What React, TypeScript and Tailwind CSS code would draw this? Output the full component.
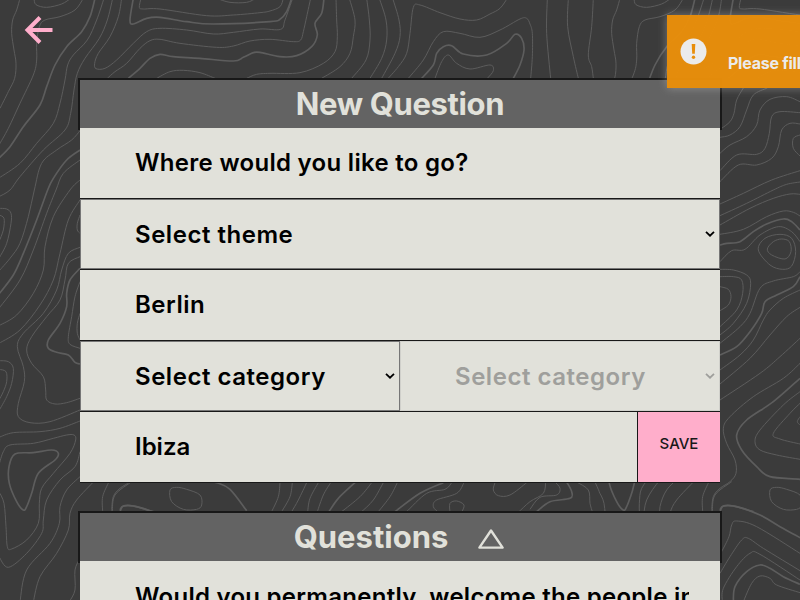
import React from "react";

type Contour = { d: string; thick?: boolean; closed?: boolean };
type Sheet = { x: number; y: number; lines: Contour[] };

const t = (d: string): Contour => ({ d });
const k = (d: string): Contour => ({ d, thick: true });
const c = (d: string): Contour => ({ d, closed: true });

// Contour map, drawn in thirds of a pixel; every sheet has its own origin.
const sheets: Sheet[] = [
  {
    x: 0,
    y: 0,
    lines: [
      t("60,-5 50,30 38,60 35,100 42,150 48,190 44,235 25,275 0,325"),
      t("250,-5 225,30 180,50 135,60 118,80 110,130 110,180 100,225 60,310 25,385 -3,435"),
      t("102,-5 108,14 140,22 185,12 212,-5"),
      k("285,-5 270,50 245,95 200,140 165,195 140,260 120,315 70,380 30,440 -3,474"),
      t("312,-5 290,60 262,120 220,165 203,195 195,240 180,310 160,370 110,430 60,490 -3,534"),
      t("338,-5 322,60 298,115 255,175 232,220 222,270 212,340 195,390 130,450 60,530 30,570 -3,590"),
      t("365,-5 355,50 330,110 295,160 284,190 288,206 315,205 350,180 400,130 440,95 480,85 560,90 640,102 700,97 780,87 842,88 855,60 878,-5"),
      k("400,-5 390,60 400,72 440,55 480,52 560,65 640,72 810,65 840,58 860,35 875,-5"),
      t("423,-5 418,22 430,27 480,27 620,47 700,45 780,38 810,33 840,20 850,-5"),
      t("650,-5 690,7 740,7 768,-5"),
      t("322,235 345,215 380,190 420,145 450,122 480,118 540,130 650,142 700,138 750,123 810,118 880,125 902,120 910,95 920,50 932,-5"),
      k("385,235 420,205 450,175 480,163 520,170 600,175 700,183 730,172 760,158 780,157 840,170 890,167 935,140 952,105 945,70 965,40 972,-5"),
      t("470,235 510,215 550,211 600,218 645,235"),
      t("740,235 770,223 810,220 900,218 970,190 1005,155 1012,110 1010,60 1008,-5"),
    ],
  },
  {
    x: 260,
    y: 0,
    lines: [
      t("268,-5 285,60 280,110 270,160 240,200 185,235"),
      t("320,-5 328,60 330,120 318,180 275,235"),
      t("358,-5 378,60 380,120 365,175 330,235"),
      t("398,-5 417,60 420,110 405,160 365,235"),
      t("380,240 415,200 440,160 450,100 460,22 480,15 540,38 600,57 650,60 690,42 720,25 742,-5"),
      t("445,235 490,180 520,125 550,95 600,100 660,112 720,90 780,57 800,55 810,72 817,100 817,170 812,235"),
      k("485,235 520,195 530,160 550,140 575,137 610,162 680,165 740,130 765,103 785,115 792,150 780,195 760,235"),
      t("525,235 545,185 565,165 590,190 630,207 690,195 700,212 682,235"),
    ],
  },
  {
    x: 530,
    y: 0,
    lines: [
      t("52,-5 50,100 62,235"),
      t("115,-5 113,80 130,170 145,235"),
      t("190,-5 185,80 175,165 185,200 190,235"),
    ],
  },
  {
    x: -70,
    y: 0,
    lines: [
      t("640,264 620,300 612,340 600,365 575,385"),
      t("712,264 670,285 650,330 630,380 600,405 570,412"),
      t("810,305 770,290 720,298 690,330 680,375 650,410 600,435 570,460"),
      t("810,338 750,335 725,350 718,400 705,445 680,463 620,465 570,512"),
      t("810,372 780,370 755,390 745,440 725,475 680,495 625,495 570,545"),
      t("810,405 790,415 790,445 810,468"),
    ],
  },
  {
    x: 0,
    y: 180,
    lines: [
      t("360,72 430,40 515,0 600,-28"),
      t("360,107 440,70 520,30 560,13 600,6"),
      t("360,135 450,85 520,55 570,42 600,43"),
      t("360,163 430,148 500,110 550,93 580,97 600,108"),
      k("360,195 380,190 420,185 460,155 500,132 550,117 575,125 600,150"),
      t("360,245 395,212 435,208 480,165 535,140 575,155 600,185"),
      c("540,163 575,175 587,215 575,258 548,268 510,255 475,210 495,175"),
      c("545,177 568,185 573,215 555,237 515,225 502,207 520,185"),
      t("360,268 400,270 440,285 452,310 440,370 400,430 360,465"),
      t("360,290 400,290 425,300 428,340 410,390 360,440"),
      t("360,320 385,328 393,350 385,375 360,392"),
      t("600,275 580,290 520,303 480,325 450,400 420,440 360,490"),
      k("600,290 580,320 530,345 495,365 485,400 450,455 410,500 360,525"),
      t("600,330 550,355 510,390 490,420 460,480 420,525 360,570"),
      t("600,382 560,410 510,465 450,535 360,612"),
      t("600,475 540,530 480,580 360,660"),
    ],
  },
  {
    x: 120,
    y: 80,
    lines: [
      t("240,850 190,895 100,950 30,1010 10,1045 20,1090 45,1140 48,1180 30,1205 0,1225 -20,1250 -25,1292"),
      k("240,895 160,965 80,1020 50,1065 65,1110 110,1160 150,1190 240,1198 290,1208 330,1228 380,1292"),
      t("240,935 190,975 120,1050 105,1085 120,1110 170,1125 240,1138"),
      t("240,970 210,1000 160,1060 180,1077 240,1092"),
      t("240,1010 232,1025 240,1035"),
      k("0,1290 10,1278 50,1280 120,1305 180,1340 240,1373"),
    ],
  },
  {
    x: -70,
    y: 380,
    lines: [
      t("575,515 597,470 605,435 620,423 680,440 810,520"),
      t("570,580 600,530 635,480 655,475 700,505 810,572"),
      t("577,665 580,625 620,560 660,520 690,523 810,600"),
      k("610,665 615,620 650,575 690,555 720,565 760,590 810,613"),
      t("640,665 665,610 690,588 720,595 740,615 810,638"),
    ],
  },
  {
    x: 0,
    y: 190,
    lines: [
      t("240,-178 215,-150 170,-120 125,-80 103,0 85,80 60,160 30,205 -3,243"),
      k("240,-120 200,-90 160,-35 143,0 110,90 70,190 40,255 -3,312"),
      t("240,-90 190,-50 168,0 140,70 100,180 60,270 -3,355"),
      t("240,-30 210,0 160,80 135,170 130,240 100,310 50,375 -3,407"),
      t("240,30 205,90 180,190 160,270 120,345 60,420 -3,460"),
      t("240,75 232,100 232,120 240,130"),
      t("240,172 205,190 185,240 170,300 130,370 70,430 52,470 70,530 73,575 55,640 55,680 90,698 150,695 240,660"),
      t("240,200 205,220 195,270 180,330 140,380 95,440 80,480 95,520 130,560 137,600 140,630 165,642 200,638 240,625"),
      k("240,235 210,270 200,310 200,350 180,400 145,450 145,475 170,487 205,495 225,517 240,522"),
      t("240,275 225,320 215,380 205,440 210,463 240,475"),
      t("240,370 232,400 232,430 240,450"),
      t("-3,55 20,57 33,70 33,100 20,160 -3,205"),
      t("-3,75 12,85 10,120 -3,155"),
      t("-3,512 25,515 40,535 35,580 20,620 -3,662"),
      t("-3,538 18,545 20,575 10,605 -3,630"),
    ],
  },
  {
    x: 0,
    y: 380,
    lines: [
      t("-3,172 40,158 120,155 180,145 240,123"),
      t("-3,255 10,215 30,195 100,190 160,175 200,165 222,165 227,180 210,220 160,280 125,325 118,370 115,430 80,480 35,507 22,500 18,440 12,370 -3,335"),
      { d: "45,222 100,218 155,210 175,220 165,240 115,280 95,340 80,380 70,390 50,365 28,310 27,260", thick: true, closed: true },
      t("240,215 225,260 180,300 140,360 130,420 125,460 80,520 25,562 -3,530"),
      t("240,290 200,330 180,380 178,430 150,490 80,570 60,665"),
      t("283,303 230,360 210,400 205,450 170,520 120,590 100,665"),
      t("240,535 225,570 225,630 208,665"),
      t("327,305 308,350 308,395"),
      t("395,305 345,345 337,395"),
      k("360,395 370,378 400,378 460,395"),
      c("510,330 530,322 560,328 600,345 605,375 590,388 550,388 515,365"),
    ],
  },
  {
    x: 260,
    y: 330,
    lines: [
      t("60,458 55,500 35,545"),
      t("97,458 90,500 65,545"),
      t("140,458 115,510 95,545"),
      t("175,458 150,505 143,545"),
      t("212,458 190,495 172,545"),
      k("285,458 235,505 207,545"),
      t("335,458 300,500 245,545"),
      t("370,458 340,510 305,545"),
      t("412,458 390,500 355,545"),
      k("550,458 480,490 405,545"),
      t("575,458 555,478 500,490 440,545"),
      t("612,458 590,490 530,510 520,530 535,547"),
      t("570,547 570,520 590,513 612,525 605,547"),
      t("705,458 700,480 715,497 750,495 800,458"),
      t("775,547 810,515 850,490 857,455"),
    ],
  },
  {
    x: 530,
    y: 380,
    lines: [
      t("0,388 30,352 80,345 90,325 75,306"),
      k("20,395 60,365 120,355 125,335 110,306"),
      t("140,306 175,330 180,370 187,395"),
      t("195,306 208,335"),
    ],
  },
];

function smooth({ d, closed }: Contour): string {
  const pts = d.split(" ").map((s) => s.split(",").map(Number));
  const n = pts.length;
  const at = (i: number) => (closed ? pts[(i + n) % n] : pts[Math.max(0, Math.min(n - 1, i))]);
  let out = `M${pts[0][0]} ${pts[0][1]}`;
  for (let i = 0; i < (closed ? n : n - 1); i++) {
    const [a, b, e, f] = [at(i - 1), at(i), at(i + 1), at(i + 2)];
    out += `C${b[0] + (e[0] - a[0]) / 6} ${b[1] + (e[1] - a[1]) / 6} ${e[0] - (f[0] - b[0]) / 6} ${e[1] - (f[1] - b[1]) / 6} ${e[0]} ${e[1]}`;
  }
  return out;
}

function Topography() {
  return (
    <svg className="absolute inset-0" width="800" height="600" viewBox="0 0 800 600" fill="none" stroke="#5d5d5d">
      <g id="tile">
        {sheets.map((s, i) => (
          <g key={i} transform={`translate(${s.x} ${s.y}) scale(0.33333)`}>
            {s.lines.map((l, j) => (
              <path key={j} d={smooth(l) + (l.closed ? "Z" : "")} strokeWidth={l.thick ? 5 : 2.9} />
            ))}
          </g>
        ))}
      </g>
      <use href="#tile" x="600" />
    </svg>
  );
}

function Chevron() {
  return (
    <svg className="shrink-0" width="10" height="6" viewBox="0 0 10 6" fill="none" stroke="currentColor" strokeWidth="1.8">
      <path d="M1 0.8 L5 4.7 L9 0.8" />
    </svg>
  );
}

function SelectBox({ label, disabled = false }: { label: string; disabled?: boolean }) {
  return (
    <div
      className={
        "flex h-[70px] flex-1 items-center justify-between border pl-[54px] pr-1 " +
        (disabled ? "border-[#d0d0cb] text-[#9f9f9c]" : "border-[#767676] text-black")
      }
    >
      <span className="pt-[2px] text-[24px] tracking-[0.53px]">{label}</span>
      <Chevron />
    </div>
  );
}

function Header({ children }: { children: React.ReactNode }) {
  return (
    <div className="-mx-[2px] -mb-[2px] flex h-[52px] items-center justify-center border-2 border-[#181818] bg-[#636363] text-[31px] font-bold leading-none text-[#e1e1da]">
      {children}
    </div>
  );
}

export default function App() {
  return (
    <div className="relative h-[600px] w-[800px] overflow-hidden bg-[#3b3b3b] font-['Inter','Liberation_Sans',sans-serif] font-semibold">
      <Topography />
      <svg className="absolute left-[24px] top-[15px]" width="30" height="30" viewBox="0 0 30 30" fill="none" stroke="#ffaecb" strokeWidth="4">
        <path d="M28.5 15 H4 M16 2.5 L3.5 15 L16 27.5" />
      </svg>

      <main className="relative mx-auto w-[640px] pt-[78px]">
        <Header>
          <h1 className="pb-[2px] tracking-[-0.35px]">New Question</h1>
        </Header>
        <section className="relative bg-[#e1e1da] text-[24px] tracking-[0.3px] text-black">
          <div className="flex h-[71px] items-center border-b border-[#181818] pl-[55px]">
            <span>Where would you like to go?</span>
          </div>
          <div className="flex h-[71px] border-b border-[#181818]">
            <SelectBox label="Select theme" />
          </div>
          <div className="flex h-[71px] items-center border-b border-[#181818] pl-[55px]">
            <span className="tracking-[0.5px]">Berlin</span>
          </div>
          <div className="flex h-[71px] border-b border-[#181818]">
            <SelectBox label="Select category" />
            <SelectBox label="Select category" disabled />
          </div>
          <div className="flex h-[71px] border-b border-[#181818]">
            <div className="flex flex-1 items-center pl-[55px]">
              <span className="tracking-normal">Ibiza</span>
            </div>
            <button className="flex w-[83px] items-center justify-center border-l border-[#181818] bg-[#ffaecb] pb-[5px] text-[15px] font-medium tracking-normal text-[#181818]">
              SAVE
            </button>
          </div>
        </section>

        <div className="h-[28px]" />
        <Header>
          <h2 className="pb-px">Questions</h2>
          <svg className="ml-[30px] mr-[2px] mt-1" width="26" height="20" viewBox="0 0 26 20" fill="none" stroke="#e1e1da" strokeWidth="2.4" strokeLinejoin="round">
            <path d="M13 1.5 L24.6 18.6 H1.4 Z" />
          </svg>
        </Header>
        <section className="relative flex h-[71px] items-center bg-[#e1e1da] pl-[55px] pr-[31px] text-[24px] tracking-[0.27px] text-black">
          <span className="overflow-hidden whitespace-nowrap">Would you permanently, welcome the people in</span>
        </section>
      </main>

      <div className="absolute left-[667px] top-[15px] flex h-[73px] w-[300px] items-center bg-[#e88e0b]/98 pl-[13px] shadow-[0_0_9px_rgba(200,200,200,0.45)]">
        <svg width="27" height="27" viewBox="0 0 27 27" fill="#ebebeb">
          <circle cx="13.5" cy="13.5" r="13" />
          <path d="M11.7 6 H15.3 L14.8 15.8 H12.2 Z" fill="#e88e0b" />
          <circle cx="13.5" cy="19.2" r="1.7" fill="#e88e0b" />
        </svg>
        <span className="ml-[21px] mt-[23px] text-[16px] font-bold leading-none tracking-[-0.25px] text-[#ebebeb]">Please fill</span>
      </div>
    </div>
  );
}
